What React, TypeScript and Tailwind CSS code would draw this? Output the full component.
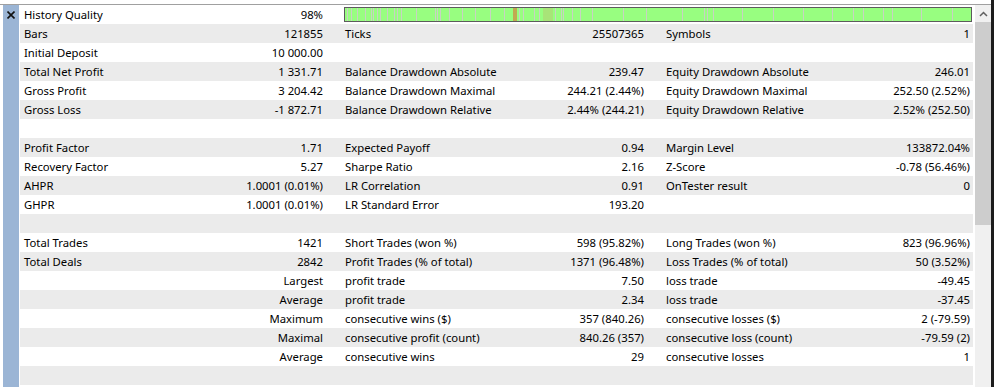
import React from "react";

type Row = (string | null)[] | null;

const rows: { c: Row; kind?: string }[] = [
  { c: ["Bars", "121855", "Ticks", "25507365", "Symbols", "1"] },
  { c: ["Initial Deposit", "10 000.00", "", "", "", ""] },
  { c: ["Total Net Profit", "1 331.71", "Balance Drawdown Absolute", "239.47", "Equity Drawdown Absolute", "246.01"] },
  { c: ["Gross Profit", "3 204.42", "Balance Drawdown Maximal", "244.21 (2.44%)", "Equity Drawdown Maximal", "252.50 (2.52%)"] },
  { c: ["Gross Loss", "-1 872.71", "Balance Drawdown Relative", "2.44% (244.21)", "Equity Drawdown Relative", "2.52% (252.50)"] },
  { c: null },
  { c: ["Profit Factor", "1.71", "Expected Payoff", "0.94", "Margin Level", "133872.04%"] },
  { c: ["Recovery Factor", "5.27", "Sharpe Ratio", "2.16", "Z-Score", "-0.78 (56.46%)"] },
  { c: ["AHPR", "1.0001 (0.01%)", "LR Correlation", "0.91", "OnTester result", "0"] },
  { c: ["GHPR", "1.0001 (0.01%)", "LR Standard Error", "193.20", "", ""] },
  { c: null },
  { c: ["Total Trades", "1421", "Short Trades (won %)", "598 (95.82%)", "Long Trades (won %)", "823 (96.96%)"] },
  { c: ["Total Deals", "2842", "Profit Trades (% of total)", "1371 (96.48%)", "Loss Trades (% of total)", "50 (3.52%)"] },
  { c: ["", "Largest", "profit trade", "7.50", "loss trade", "-49.45"] },
  { c: ["", "Average", "profit trade", "2.34", "loss trade", "-37.45"] },
  { c: ["", "Maximum", "consecutive wins ($)", "357 (840.26)", "consecutive losses ($)", "2 (-79.59)"] },
  { c: ["", "Maximal", "consecutive profit (count)", "840.26 (357)", "consecutive loss (count)", "-79.59 (2)"] },
  { c: ["", "Average", "consecutive wins", "29", "consecutive losses", "1"] },
  { c: null },
  { c: null },
];

const seps = [347, 351, 357, 365, 371, 373, 377, 380, 387, 394, 397, 401, 416, 435, 437, 440, 449, 462, 475, 490, 504, 519, 523, 534, 539, 555, 561, 563, 572, 580, 592, 623, 646, 682, 704, 707, 713, 742, 773, 803, 832, 853, 863, 883, 892, 921, 952];

function Cell({ label, value, last }: { label: string | null; value: string | null; last?: boolean }) {
  return (
    <div className={"flex items-center justify-between pl-[4px] " + (last ? "pr-[3px]" : "pr-[18px]")}>
      <span className="whitespace-nowrap">{label}</span>
      <span className="whitespace-nowrap">{value}</span>
    </div>
  );
}

export default function App() {
  return (
    <div
      className="w-[994px] h-[387px] overflow-hidden bg-white flex text-[11.3px] text-black"
      style={{ fontFamily: '"Noto Sans", sans-serif' }}
    >
      <div className="w-[991px] flex flex-col">
        <div className="h-[4px]" />
        <div className="h-px bg-[#a0a0a0]" />
        <div className="flex flex-1 min-h-0">
          <div className="w-[3px]" />
          <div className="w-[16px] bg-[#9bb5d5] flex justify-center pt-[6px]">
            <svg width="8" height="8" viewBox="0 0 8 8">
              <path d="M0.5 0.5 L7.5 7.5 M7.5 0.5 L0.5 7.5" stroke="#111" strokeWidth="1.6" />
            </svg>
          </div>
          <div className="w-px" />
          <div className="w-[953px] flex flex-col">
            <div className="h-[19px] grid grid-cols-[321px_321px_1fr] leading-[19px] bg-white">
              <Cell label="History Quality" value="98%" />
              <div className="col-span-2 flex items-start pt-[2px] pl-[3px] pr-[1px]">
                <div className="relative w-full h-[15px] border border-[#5c5c5c] bg-[#98fe80] overflow-hidden">
                  {seps.map((x) => (
                    <div
                      key={x}
                      className="absolute top-0 bottom-0 w-px bg-[#c8d2c2]"
                      style={{ left: x - 345 }}
                    />
                  ))}
                  <div className="absolute top-0 bottom-0 w-[4px] bg-[#c2a852]" style={{ left: 513 - 345 }} />
                  <div className="absolute top-0 bottom-0 w-[10px] bg-[#a8e478]" style={{ left: 543 - 345 }} />
                </div>
              </div>
            </div>
            {rows.map((r, i) => (
              <div
                key={i}
                className={
                  "h-[19px] shrink-0 grid grid-cols-[321px_321px_1fr] leading-[19px] " +
                  (i % 2 === 0 ? "bg-[#ebebeb]" : "bg-white")
                }
              >
                {r.c && (
                  <>
                    <Cell label={r.c[0]} value={r.c[1]} />
                    <Cell label={r.c[2]} value={r.c[3]} />
                    <Cell label={r.c[4]} value={r.c[5]} last />
                  </>
                )}
              </div>
            ))}
          </div>
          <div className="w-[2px]" />
          <div className="w-[16px] bg-[#f0f0f0] flex flex-col">
            <div className="h-[17px] flex items-center justify-center">
              <svg width="9" height="6" viewBox="0 0 9 6">
                <path d="M1 5 L4.5 1.5 L8 5" stroke="#606060" strokeWidth="1.5" fill="none" />
              </svg>
            </div>
            <div className="h-[203px] bg-[#cdcdcd]" />
          </div>
        </div>
      </div>
      <div className="w-[3px] bg-[#1c1c1c]" />
    </div>
  );
}
